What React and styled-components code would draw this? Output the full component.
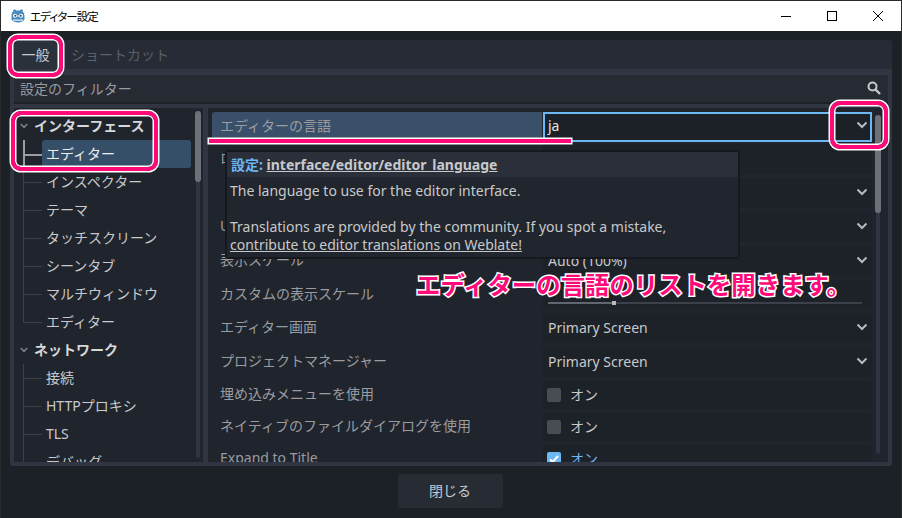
import React from "react";
import styled, { createGlobalStyle } from "styled-components";

const FONT = `"Noto Sans", "Noto Sans CJK JP", sans-serif`;
const C = {
  body: "#1c2027",
  border: "#303541",
  panel: "#20242d",
  value: "#1d2128",
  tabBar: "#262b35",
  tab: "#2b313b",
  filter: "#252a33",
  sel: "#364f69",
  blue: "#6cb8f5",
  text: "#c8c9cb",
  dim: "#9a9ca0",
  line: "#3c404a",
  pink: "#ff0a78",
};

const Global = createGlobalStyle`
  html, body { margin: 0; padding: 0; background: ${C.body}; }
  * { box-sizing: border-box; }
`;

const Window = styled.div`
  position: relative;
  width: 902px;
  height: 518px;
  overflow: hidden;
  display: flex;
  flex-direction: column;
  background: ${C.body};
  border-top: 1px solid #2a2a2a;
  border-left: 1px solid #2a2a2a;
  border-right: 1px solid #2a2a2a;
  font-family: ${FONT};
  font-size: 14px;
  color: ${C.text};
`;
const TitleBar = styled.div`
  flex: none;
  height: 30px;
  background: #fff;
  display: flex;
  align-items: center;
  padding-left: 9px;
  color: #000;
  font-size: 11.5px;
  letter-spacing: -0.9px;
  font-family: "Noto Sans CJK JP", sans-serif;
  font-feature-settings: "palt";
`;
const AppIcon = styled.svg`
  width: 16px;
  height: 16px;
  margin-right: 4px;
`;
const TitleText = styled.span`
  flex: 1;
`;
const WinButton = styled.div`
  width: 46px;
  height: 30px;
  display: flex;
  align-items: center;
  justify-content: center;
`;
const Body = styled.div`
  flex: 1;
  display: flex;
  flex-direction: column;
  padding: 9px 9px 0;
  min-height: 0;
`;
const TabBar = styled.div`
  flex: none;
  height: 29px;
  background: ${C.tabBar};
  border-radius: 3px 3px 0 0;
  display: flex;
  padding-left: 3px;
`;
const Tab = styled.div`
  width: 45px;
  height: 29px;
  margin-top: 1px;
  padding-bottom: 4px;
  display: flex;
  align-items: center;
  justify-content: ${(p) => (p.$active ? "center" : "flex-start")};
  color: ${(p) => (p.$active ? C.text : "#5c6068")};
  background: ${(p) => (p.$active ? C.tab : "transparent")};
  border-radius: 3px 3px 0 0;
  ${(p) => !p.$active && "width: auto; padding-left: 13px;"}
`;
const SettingsPanel = styled.div`
  flex: none;
  height: 397px;
  background: ${C.border};
  padding: 6px 4px 4px;
  display: flex;
  flex-direction: column;
  border-radius: 0 0 3px 3px;
`;
const FilterBar = styled.div`
  flex: none;
  height: 29px;
  background: ${C.filter};
  border-bottom: 2px solid ${C.body};
  margin-bottom: 4px;
  padding: 0 7px 1px 7px;
  display: flex;
  align-items: center;
  justify-content: space-between;
  color: ${C.dim};
`;
const FilterHint = styled.span`
  margin-bottom: 1px;
  margin-left: -1px;
`;
const Split = styled.div`
  flex: 1;
  min-height: 0;
  display: flex;
  gap: 5px;
`;
const TreePanel = styled.div`
  width: 189px;
  background: ${C.panel};
  display: flex;
  overflow: hidden;
`;
const TreeList = styled.div`
  width: 177px;
  padding-top: 4px;
  flex: none;
`;
const TreeGroup = styled.div`
  height: 28px;
  display: flex;
  align-items: center;
  padding: 0 0 2px 6px;
  font-weight: 700;
  color: #d6d7d8;
`;
const Caret = styled.svg`
  width: 8px;
  height: 6px;
  margin: 2px 6px 0 0;
`;
const TreeItem = styled.div`
  height: 28px;
  margin-left: 9px;
  display: flex;
`;
const Branch = styled.div`
  width: 19px;
  flex: none;
  --c: ${(p) => (p.$selected ? "#9b9da1" : C.line)};
  --w: ${(p) => (p.$selected ? "2px" : "1px")};
  background:
    linear-gradient(var(--c), var(--c)) left top / var(--w) ${(p) => (p.$last ? "15px" : "100%")} no-repeat,
    linear-gradient(var(--c), var(--c)) left 14px / 100% var(--w) no-repeat;
`;
const ItemLabel = styled.div`
  flex: 1;
  display: flex;
  align-items: center;
  padding: 0 0 2px 4px;
  border-radius: 3px;
  background: ${(p) => (p.$selected ? C.sel : "transparent")};
  color: ${(p) => (p.$selected ? "#eceded" : C.text)};
`;
const ScrollTrack = styled.div`
  flex: none;
  width: 4px;
  margin: ${(p) => p.$top}px 0 ${(p) => p.$bottom}px ${(p) => p.$gap}px;
  background: ${C.border};
  border-radius: 2px;
`;
const ScrollThumb = styled.div`
  width: 6px;
  margin-left: -1px;
  height: ${(p) => p.$h}px;
  background: #6e7077;
  border-radius: 3px;
`;
const PropsPanel = styled.div`
  flex: 1;
  background: ${C.panel};
  display: flex;
  overflow: hidden;
`;
const PropsList = styled.div`
  width: 664px;
  flex: none;
  padding: 4px 0 0 4px;
`;
const Row = styled.div`
  display: flex;
  height: ${(p) => p.$h || 30}px;
  margin-bottom: ${(p) => (p.$tight ? 2 : 4)}px;
`;
const Label = styled.div`
  width: 330px;
  flex: none;
  display: flex;
  align-items: center;
  padding: 0 0 4px 8px;
  white-space: nowrap;
  overflow: hidden;
  color: ${C.dim};
  border-radius: 3px 0 0 3px;
  background: ${(p) => (p.$active ? "#3a506a" : "transparent")};
`;
const Value = styled.div`
  flex: 1;
  display: flex;
  align-items: center;
  justify-content: space-between;
  padding: 0 4px 2px 6px;
  border-radius: 3px;
  background: ${C.value};
  color: ${C.text};
`;
const ActiveValue = styled(Value)`
  margin-left: 1px;
  border: 2px solid ${C.blue};
  border-radius: 0;
  background: ${C.body};
  padding: 0 2px 4px 3px;
  color: #e4e5e6;
`;
const Chevron = styled.svg`
  width: 12px;
  height: 8px;
`;
const SliderValue = styled(Value)`
  align-items: flex-end;
  padding: 0 10px 5px 6px;
`;
const SliderTrack = styled.div`
  flex: 1;
  height: 2px;
  background: ${C.line};
  display: flex;
  align-items: center;
`;
const SliderFill = styled.div`
  width: 64px;
  height: 2px;
  background: #62666e;
`;
const SliderGrab = styled.div`
  width: 4px;
  height: 4px;
  background: #b9babd;
`;
const CheckValue = styled(Value)`
  justify-content: flex-start;
  gap: 9px;
  padding-left: 5px;
  color: ${(p) => (p.$on ? C.blue : C.text)};
`;
const CheckBox = styled.div`
  width: 14px;
  height: 14px;
  margin-top: 2px;
  border-radius: 2px;
  display: flex;
  align-items: center;
  justify-content: center;
  background: ${(p) => (p.$on ? C.blue : "#484c55")};
`;
const Footer = styled.div`
  flex: 1;
  display: flex;
  justify-content: center;
  padding: 8px 2px 0 0;
`;
const CloseButton = styled.div`
  width: 105px;
  height: 34px;
  padding-bottom: 2px;
  display: flex;
  align-items: center;
  justify-content: center;
  border-radius: 3px;
  background: #262b34;
`;
const Tooltip = styled.div`
  position: absolute;
  left: 224px;
  top: 149px;
  width: 515px;
  height: 109px;
  background: #21262e;
  border: 2px solid #15181d;
  border-radius: 3px;
  color: ${C.text};
  line-height: 18px;
`;
const TooltipHead = styled.div`
  height: 25px;
  background: #2a2f39;
  padding: 4px 0 0 4px;
  font-weight: 700;
`;
const TooltipKey = styled.span`
  color: ${C.blue};
`;
const TooltipPath = styled.span`
  text-decoration: underline;
`;
const TooltipBody = styled.div`
  padding: 5px 0 0 3px;
  white-space: pre-line;
`;
const TooltipLink = styled.span`
  text-decoration: underline;
`;
const Callout = styled.div`
  position: absolute;
  border: 4px solid ${C.pink};
  border-radius: 10px;
  box-shadow: 0 0 0 1.5px #fff, inset 0 0 0 1.5px #fff;
  left: ${(p) => p.$x}px;
  top: ${(p) => p.$y}px;
  width: ${(p) => p.$w}px;
  height: ${(p) => p.$h}px;
`;
const Underline = styled.div`
  position: absolute;
  left: 208px;
  top: 138px;
  width: 362px;
  height: 4px;
  background: ${C.pink};
  box-shadow: 0 0 0 1.5px #fff;
`;
const Caption = styled.div`
  position: absolute;
  left: 415px;
  top: 266px;
  font-family: "Noto Sans CJK JP", sans-serif;
  font-size: 24.4px;
  line-height: 34px;
  font-weight: 700;
  white-space: nowrap;
  color: ${C.pink};
  -webkit-text-stroke: 3px #fff;
  paint-order: stroke fill;
`;

const Down = () => (
  <Chevron viewBox="0 0 12 8">
    <polyline points="1.5,1.5 6,6 10.5,1.5" fill="none" stroke="#b8babd" strokeWidth="2" />
  </Chevron>
);

const TreeCaret = () => (
  <Caret viewBox="0 0 8 6">
    <polyline points="0.8,1 4,4.4 7.2,1" fill="none" stroke="#7d8087" strokeWidth="1.6" />
  </Caret>
);

const GodotIcon = () => (
  <AppIcon viewBox="0 0 16 16">
    <path
      d="M5 1.2 6.2 2.6h3.6L11 1.2l2 .9-.3 1.800 1.600 1.400-.5 1.400.7.4v4.400c-1 1.600-3 2.900-6.500 2.900s-5.500-1.300-6.500-2.900V6.100l.7-.4-.5-1.400L3.300 3.900 3 2.100z"
      fill="#478cbf"
    />
    <circle cx="5" cy="7.700" r="2" fill="#fff" />
    <circle cx="11" cy="7.700" r="2" fill="#fff" />
    <circle cx="5.300" cy="7.800" r="1" fill="#414042" />
    <circle cx="10.700" cy="7.800" r="1" fill="#414042" />
    <rect x="7.500" y="7" width="1" height="2" fill="#fff" />
    <path d="M3 11.500h10v1.300H3z" fill="#dfe9f2" />
  </AppIcon>
);

const treeA = ["エディター", "インスペクター", "テーマ", "タッチスクリーン", "シーンタブ", "マルチウィンドウ", "エディター"];
const treeB = ["接続", "HTTPプロキシ", "TLS", "デバッグ"];

export default function App() {
  return (
    <Window>
      <Global />
      <TitleBar>
        <GodotIcon />
        <TitleText>エディター設定</TitleText>
        <WinButton>
          <svg width="10" height="10" viewBox="0 0 10 10">
            <path d="M0 5.500h10" stroke="#000" strokeWidth="1" />
          </svg>
        </WinButton>
        <WinButton>
          <svg width="10" height="10" viewBox="0 0 10 10">
            <rect x=".5" y=".5" width="9" height="9" fill="none" stroke="#000" />
          </svg>
        </WinButton>
        <WinButton>
          <svg width="10" height="10" viewBox="0 0 10 10">
            <path d="M0 0l10 10M10 0L0 10" stroke="#000" strokeWidth="1" />
          </svg>
        </WinButton>
      </TitleBar>
      <Body>
        <TabBar>
          <Tab $active>一般</Tab>
          <Tab>ショートカット</Tab>
        </TabBar>
        <SettingsPanel>
          <FilterBar>
            <FilterHint>設定のフィルター</FilterHint>
            <svg width="14" height="14" viewBox="0 0 14 14">
              <circle cx="5.500" cy="5.500" r="4" fill="none" stroke="#c8c9cb" strokeWidth="2" />
              <path d="M8.500 8.500 13 13" stroke="#c8c9cb" strokeWidth="2.400" />
            </svg>
          </FilterBar>
          <Split>
            <TreePanel>
              <TreeList>
                <TreeGroup>
                  <TreeCaret />
                  インターフェース
                </TreeGroup>
                {treeA.map((t, i) => (
                  <TreeItem key={i}>
                    <Branch $selected={i === 0} $last={i === treeA.length - 1} />
                    <ItemLabel $selected={i === 0}>{t}</ItemLabel>
                  </TreeItem>
                ))}
                <TreeGroup>
                  <TreeCaret />
                  ネットワーク
                </TreeGroup>
                {treeB.map((t, i) => (
                  <TreeItem key={i}>
                    <Branch />
                    <ItemLabel>{t}</ItemLabel>
                  </TreeItem>
                ))}
              </TreeList>
              <ScrollTrack $gap={5} $top={3} $bottom={4}>
                <ScrollThumb $h={71} />
              </ScrollTrack>
            </TreePanel>
            <PropsPanel>
              <PropsList>
                <Row $tight>
                  <Label $active>エディターの言語</Label>
                  <ActiveValue>
                    ja
                    <Down />
                  </ActiveValue>
                </Row>
                <Row>
                  <Label>ローカライズ設定</Label>
                  <Value />
                </Row>
                <Row>
                  <Label />
                  <Value>
                    <span />
                    <Down />
                  </Value>
                </Row>
                <Row>
                  <Label>UIレイアウト方向</Label>
                  <Value>
                    <span />
                    <Down />
                  </Value>
                </Row>
                <Row>
                  <Label>表示スケール</Label>
                  <Value>
                    Auto (100%)
                    <Down />
                  </Value>
                </Row>
                <Row $h={29}>
                  <Label>カスタムの表示スケール</Label>
                  <SliderValue>
                    <SliderTrack>
                      <SliderFill />
                      <SliderGrab />
                    </SliderTrack>
                  </SliderValue>
                </Row>
                <Row>
                  <Label>エディター画面</Label>
                  <Value>
                    Primary Screen
                    <Down />
                  </Value>
                </Row>
                <Row>
                  <Label>プロジェクトマネージャー</Label>
                  <Value>
                    Primary Screen
                    <Down />
                  </Value>
                </Row>
                <Row $h={28}>
                  <Label>埋め込みメニューを使用</Label>
                  <CheckValue>
                    <CheckBox />
                    オン
                  </CheckValue>
                </Row>
                <Row $h={28}>
                  <Label>ネイティブのファイルダイアログを使用</Label>
                  <CheckValue>
                    <CheckBox />
                    オン
                  </CheckValue>
                </Row>
                <Row $h={28}>
                  <Label>Expand to Title</Label>
                  <CheckValue $on>
                    <CheckBox $on>
                      <svg width="10" height="8" viewBox="0 0 10 8">
                        <polyline points="1,4.500 3.700,7 9,1" fill="none" stroke="#fff" strokeWidth="2" />
                      </svg>
                    </CheckBox>
                    オン
                  </CheckValue>
                </Row>
              </PropsList>
              <ScrollTrack $gap={4} $top={7} $bottom={8}>
                <ScrollThumb $h={98} />
              </ScrollTrack>
            </PropsPanel>
          </Split>
        </SettingsPanel>
        <Footer>
          <CloseButton>閉じる</CloseButton>
        </Footer>
      </Body>
      <Tooltip>
        <TooltipHead>
          <TooltipKey>設定:</TooltipKey> <TooltipPath>interface/editor/editor_language</TooltipPath>
        </TooltipHead>
        <TooltipBody>
          {"The language to use for the editor interface.\n\nTranslations are provided by the community. If you spot a mistake,\n"}
          <TooltipLink>contribute to editor translations on Weblate!</TooltipLink>
        </TooltipBody>
      </Tooltip>
      <Callout $x={7} $y={34} $w={55} $h={42} />
      <Callout $x={10} $y={110} $w={147} $h={60} />
      <Callout $x={829} $y={100} $w={58} $h={48} />
      <Underline />
      <Caption>エディターの言語のリストを開きます。</Caption>
    </Window>
  );
}
